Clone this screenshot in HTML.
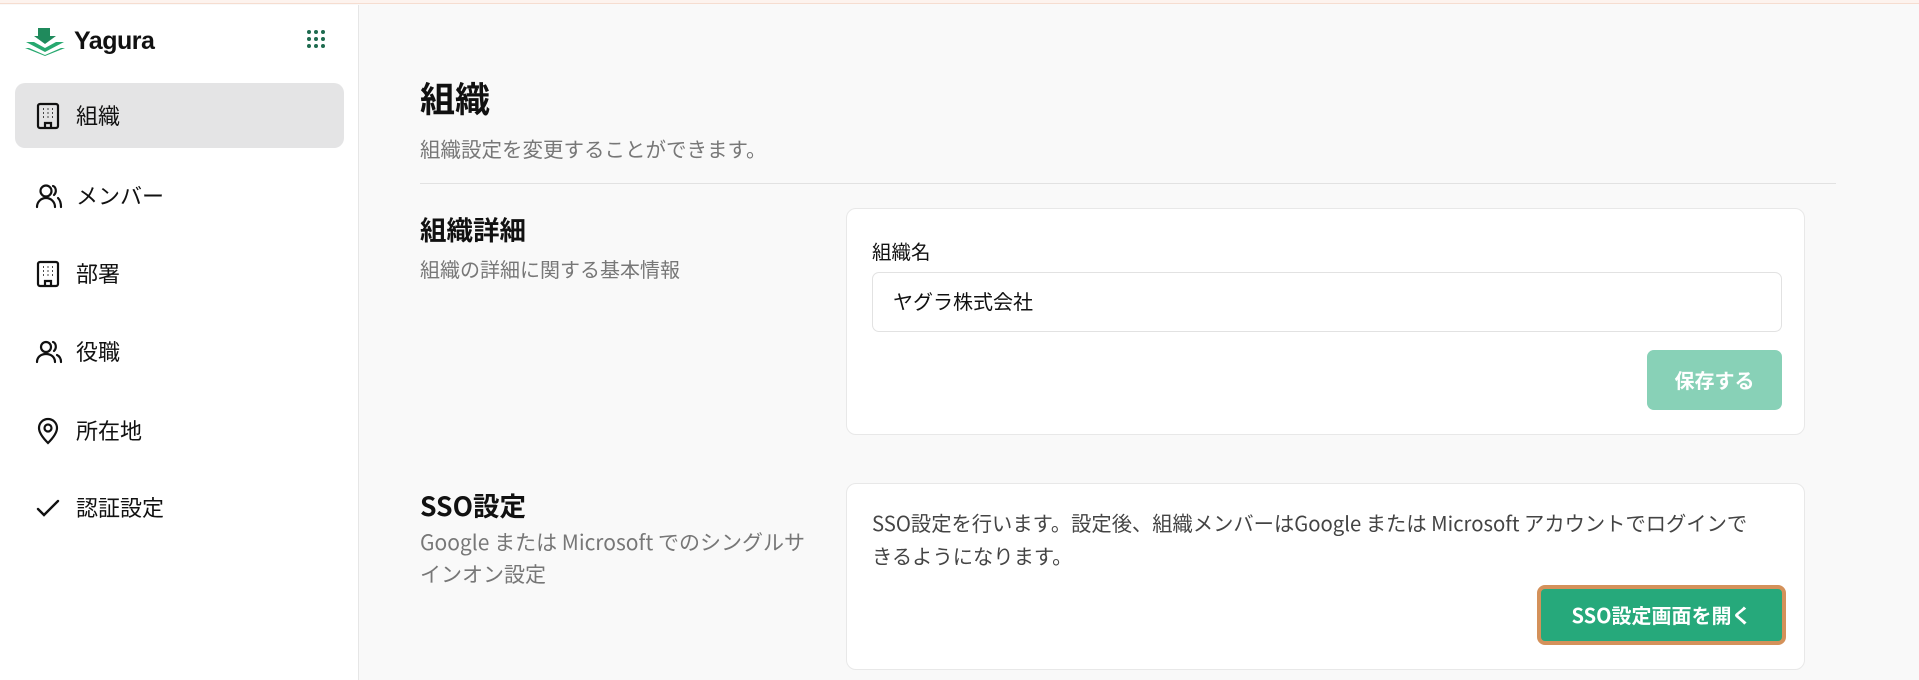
<!DOCTYPE html>
<html><head><meta charset="utf-8"><style>
*{box-sizing:border-box;margin:0;padding:0}
body{width:1919px;height:680px;overflow:hidden;background:#f9f9f9;font-family:"Noto Sans CJK JP","Liberation Sans",sans-serif;color:#111;position:relative;line-height:1.3}
.top{position:absolute;left:0;top:0;width:1919px;height:4px;background:#fdf3ee;border-bottom:1px solid #f6ddd0}
.side{position:absolute;left:0;top:5px;width:359px;height:675px;background:#fff;border-right:1px solid #e6e6e6}
.logo{position:absolute;left:24px;top:20px;display:flex;align-items:center}
.logo span{font-family:"Liberation Sans",sans-serif;font-size:25px;font-weight:bold;margin-left:8px;letter-spacing:-0.5px}
.nav{position:absolute;left:15px;width:329px;height:65px;display:flex;align-items:center;font-size:22px;border-radius:10px}
.nav svg{position:absolute;left:20px}
.nav .t{position:absolute;left:61px;top:18px}
.act{background:#e4e4e5}
.a{position:absolute}
.card{position:absolute;left:846px;width:959px;background:#fff;border:1px solid #e8e8e8;border-radius:10px}
</style></head><body>
<div class="top"></div>
<div class="side">
 <div class="logo">
  <svg width="42" height="30" viewBox="0 0 42 30"><path d="M14 2h12v8h6l-11 8-11-8h4z" fill="#1f8a5c"/><path d="M2 16l8 0 11 6 11-6 8 0-19 10z" fill="#27a86f"/><path d="M1 22l4 0 16 7 16-7 4 0-20 8z" fill="#27a86f"/></svg>
  <span>Yagura</span>
 </div>
 <svg class="a" style="left:306px;top:24px" width="20" height="20" viewBox="0 0 20 20" fill="#1e6b4f"><circle cx="3" cy="3" r="2"/><circle cx="10" cy="3" r="2"/><circle cx="17" cy="3" r="2"/><circle cx="3" cy="10" r="2"/><circle cx="10" cy="10" r="2"/><circle cx="17" cy="10" r="2"/><circle cx="3" cy="17" r="2"/><circle cx="10" cy="17" r="2"/><circle cx="17" cy="17" r="2"/></svg>
 <div class="nav act" style="top:78px"><svg width="26" height="28" viewBox="0 0 26 28" fill="none" stroke="#111" stroke-width="2.2"><rect x="3" y="2" width="20" height="24" rx="2"/><path d="M10 26v-5h6v5"/><g stroke-width="1.6"><path d="M8 7h1M12.5 7h1M17 7h1M8 11h1M12.5 11h1M17 11h1M8 15h1M12.5 15h1M17 15h1"/></g></svg><span class="t">組織</span></div>
 <div class="nav" style="top:158px"><svg width="28" height="26" viewBox="0 0 28 26" fill="none" stroke="#111" stroke-width="2.2" stroke-linecap="round"><circle cx="11" cy="8" r="5.5"/><path d="M2 24c0-5 4-9 9-9s9 4 9 9"/><path d="M18 3c3 1 4 6 1 9M23 15c2 2 3 5 3 9"/></svg><span class="t">メンバー</span></div>
 <div class="nav" style="top:236px"><svg width="26" height="28" viewBox="0 0 26 28" fill="none" stroke="#111" stroke-width="2.2"><rect x="3" y="2" width="20" height="24" rx="2"/><path d="M10 26v-5h6v5"/><g stroke-width="1.6"><path d="M8 7h1M12.5 7h1M17 7h1M8 11h1M12.5 11h1M17 11h1M8 15h1M12.5 15h1M17 15h1"/></g></svg><span class="t">部署</span></div>
 <div class="nav" style="top:314px"><svg width="28" height="26" viewBox="0 0 28 26" fill="none" stroke="#111" stroke-width="2.2" stroke-linecap="round"><circle cx="11" cy="8" r="5"/><path d="M2 23c0-5 4-8 9-8s9 3 9 8"/><path d="M18 3c3 1 4 6 1 9M22 16c2 1 4 3 4 7"/></svg><span class="t">役職</span></div>
 <div class="nav" style="top:393px"><svg width="26" height="28" viewBox="0 0 26 28" fill="none" stroke="#111" stroke-width="2.2"><path d="M13 26c-5-5-9-10-9-15a9 9 0 0 1 18 0c0 5-4 10-9 15z"/><circle cx="13" cy="11" r="3.5"/></svg><span class="t">所在地</span></div>
 <div class="nav" style="top:470px"><svg width="26" height="26" viewBox="0 0 26 26" fill="none" stroke="#111" stroke-width="2.4" stroke-linecap="round"><path d="M3 14l6 6L23 6"/></svg><span class="t">認証設定</span></div>
</div>
<div class="a" style="left:420px;top:75px;font-size:35px;font-weight:bold">組織</div>
<div class="a" style="left:420px;top:135px;font-size:20.5px;color:#777">組織設定を変更することができます。</div>
<div class="a" style="left:420px;top:183px;width:1416px;height:1px;background:#e2e2e2"></div>
<div class="a" style="left:420px;top:212px;font-size:26.5px;font-weight:bold">組織詳細</div>
<div class="a" style="left:420px;top:256px;font-size:20px;color:#777">組織の詳細に関する基本情報</div>
<div class="card" style="top:208px;height:227px">
 <div class="a" style="left:25px;top:29px;font-size:19.5px">組織名</div>
 <div class="a" style="left:25px;top:63px;width:910px;height:60px;border:1px solid #e2e2e2;border-radius:7px;font-size:20px;padding:15px 0 0 20px">ヤグラ株式会社</div>
 <div class="a" style="left:800px;top:141px;width:135px;height:60px;background:#88d1b7;border-radius:7px;color:#fff;font-weight:bold;font-size:20px;text-align:center;line-height:60px">保存する</div>
</div>
<div class="a" style="left:420px;top:488px;font-size:26.5px;font-weight:bold">SSO設定</div>
<div class="a" style="left:420px;top:526px;font-size:21px;color:#777;line-height:32px;width:392px">Google または Microsoft でのシングルサインオン設定</div>
<div class="card" style="top:483px;height:187px">
 <div class="a" style="left:25px;top:22px;font-size:20.3px;color:#444;line-height:33px;width:895px">SSO設定を行います。設定後、組織メンバーはGoogle または Microsoft アカウントでログインできるようになります。</div>
 <div class="a" style="left:690px;top:101px;width:249px;height:60px;background:#26a97b;border:4px solid #d4915a;border-radius:8px;color:#fff;font-weight:bold;font-size:20px;text-align:center;line-height:52px">SSO設定画面を開く</div>
</div>
</body></html>
